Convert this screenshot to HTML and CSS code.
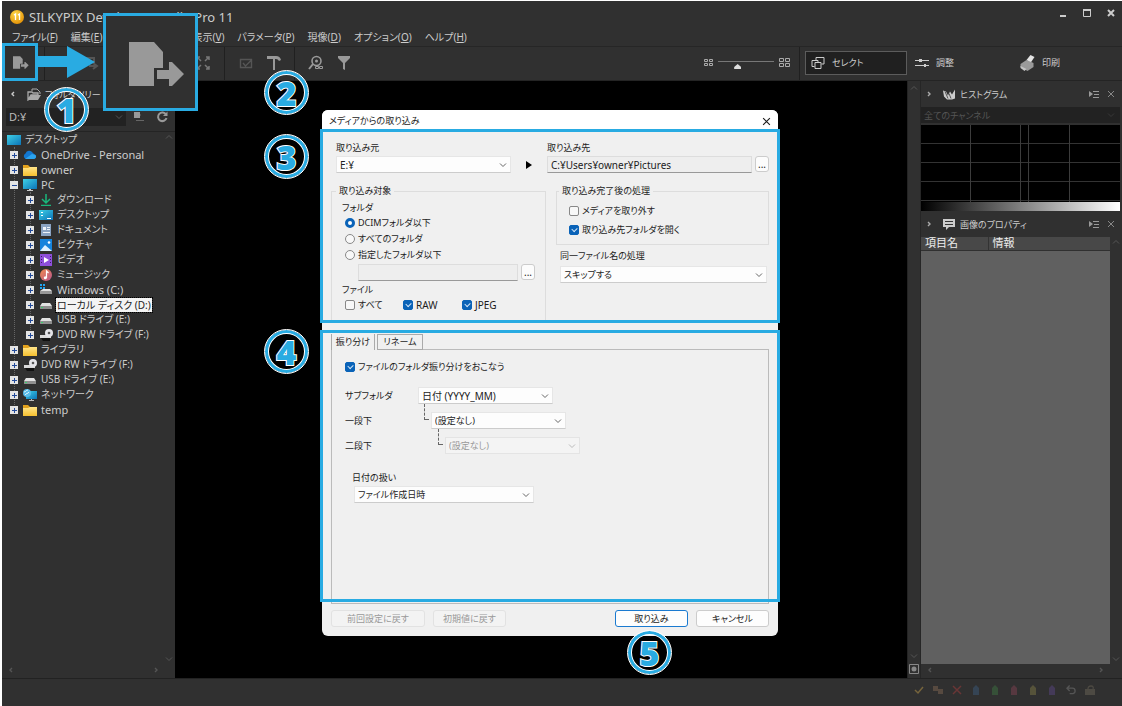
FILE: index.html
```html
<!DOCTYPE html>
<html lang="ja">
<head>
<meta charset="utf-8">
<title>SILKYPIX Developer Studio Pro 11</title>
<link rel="stylesheet" href="styles.css">
</head>
<body>
<svg class="defs" aria-hidden="true">
  <defs>
    <linearGradient id="teal" x1="0" y1="0" x2="1" y2="1"><stop offset="0" stop-color="#3fd0e6"/><stop offset="1" stop-color="#0b74b8"/></linearGradient>
    <linearGradient id="gold" x1="0" y1="0" x2="0" y2="1"><stop offset="0" stop-color="#ffe489"/><stop offset="1" stop-color="#f6c02f"/></linearGradient>
    <linearGradient id="note" x1="0" y1="0" x2="1" y2="1"><stop offset="0" stop-color="#f08a4e"/><stop offset="1" stop-color="#b8558c"/></linearGradient>
    <radialGradient id="ball" cx=".4" cy=".3" r=".8"><stop offset="0" stop-color="#ffd94a"/><stop offset="1" stop-color="#e08a00"/></radialGradient>
  </defs>
  <symbol id="chev-down" viewBox="0 0 8 8"><path d="M1 2.5 4 5.5 7 2.5" fill="none" stroke="currentColor"/></symbol>
  <symbol id="chev-up" viewBox="0 0 8 8"><path d="M1 5.5 4 2.5 7 5.5" fill="none" stroke="currentColor"/></symbol>
  <symbol id="chev-left" viewBox="0 0 8 8"><path d="M5 2 3 4 5 6" fill="none" stroke="currentColor" stroke-width="1.4"/></symbol>
  <symbol id="chev-right" viewBox="0 0 8 8"><path d="M3 2 5 4 3 6" fill="none" stroke="currentColor" stroke-width="1.4"/></symbol>
  <symbol id="cross" viewBox="0 0 8 8"><path d="M1 1 7 7M7 1 1 7" fill="none" stroke="currentColor"/></symbol>
  <symbol id="panel-menu" viewBox="0 0 10 8"><path d="M0 1v6l4-3z" fill="currentColor"/><path d="M4 1.500h6M5 4.500h5M4 7.500h6" stroke="currentColor"/></symbol>
  <symbol id="import" viewBox="0 0 56 44"><path d="M0 0h25l9 10v16h-9v18H0z" fill="currentColor"/><path d="M28 28h12v-8h3l12 12-12 12h-3v-7H28z" fill="currentColor"/></symbol>
  <symbol id="i-desk" viewBox="0 0 14 12"><path d="M0 1h14v10H0z" fill="url(#teal)"/></symbol>
  <symbol id="i-desk2" viewBox="0 0 14 12"><path d="M0 1h14v10H0z" fill="url(#teal)"/><path d="M2 3h2v1H2zM2 6h2v1H2zM8 9h4v1H8z" fill="#fff"/></symbol>
  <symbol id="i-pc" viewBox="0 0 14 12"><path d="M0 0h14v10H0z" fill="url(#teal)"/><path d="M6 10h2v1h2v1H4v-1h2z" fill="#ccc"/></symbol>
  <symbol id="i-cloud" viewBox="0 0 14 12"><path d="M3 10a3 3 0 0 1-.5-5.600A4 4 0 0 1 9.500 3.500L11 5a2.600 2.600 0 0 1 0 5z" fill="#1377d0"/><path d="M2 10 9 5l3.500 1A2.500 2.500 0 0 1 11 10z" fill="#2ba3ee"/></symbol>
  <symbol id="i-folder" viewBox="0 0 14 12"><path d="M0 1h5l2 2h6v8H0z" fill="#e2a11c"/><path d="M0 4h5l2-1h7v9H0z" fill="url(#gold)"/></symbol>
  <symbol id="i-down" viewBox="0 0 14 12"><path d="M7 0v9M3 5l4 4 4-4M2 11.500h10" fill="none" stroke="#19b87c" stroke-width="1.500"/></symbol>
  <symbol id="i-doc" viewBox="0 0 14 12"><path d="M2 0h10v12H2z" fill="#8ba4c4"/><path d="M4 3h3v3H4zM8 3h3v1H8zM8 5h3v1H8zM4 8h7v1H4z" fill="#eef3fa"/></symbol>
  <symbol id="i-pic" viewBox="0 0 14 12"><path d="M1 0h12v12H1z" fill="#1583dc"/><path d="m1 12 5-6 7 6z" fill="#dff2ff"/><circle cx="10" cy="3.500" r="1.300" fill="#fff"/></symbol>
  <symbol id="i-video" viewBox="0 0 14 12"><path d="M1 0h12v12H1z" fill="#8e4fdb"/><path d="M5 3v6l5-3z" fill="#fff"/><path d="M2 2h1v1H2zM2 5h1v1H2zM2 8h1v1H2zM11 2h1v1h-1zM11 5h1v1h-1zM11 8h1v1h-1z" fill="#3b1c66"/></symbol>
  <symbol id="i-music" viewBox="0 0 14 12"><circle cx="7" cy="6" r="6" fill="url(#note)"/><path d="M7.500 9V2l2 2" fill="none" stroke="#fff" stroke-width="1.200"/><circle cx="6.300" cy="8.700" r="1.500" fill="#fff"/></symbol>
  <symbol id="i-drive" viewBox="0 0 14 12"><path d="M3 4h8l2 3H1z" fill="#e2e2e2"/><path d="M1 7h12v3H1z" fill="#8f8f8f"/><path d="M2 8h2v1H2z" fill="#3bd16f"/></symbol>
  <symbol id="i-win" viewBox="0 0 14 12"><path d="M4 5h7l2 2H1z" fill="#e2e2e2"/><path d="M1 7h12v3H1z" fill="#999"/><path d="M1 0h2v2H1zM4 0h2v2H4zM1 3h2v2H1zM4 3h2v2H4z" fill="#20a4f3"/></symbol>
  <symbol id="i-dvd" viewBox="0 0 14 12"><path d="M1 6h11v3H1z" fill="#d8d8d8"/><path d="M2 9h9v3H4z" fill="#101010"/><circle cx="10" cy="4" r="4" fill="#e4e4e8"/><circle cx="10" cy="4" r="1.300" fill="#555"/></symbol>
  <symbol id="i-net" viewBox="0 0 14 12"><path d="M3 2h11v8H3z" fill="url(#teal)"/><path d="M8 10h1v1h2v1H6v-1h2z" fill="#bbb"/><circle cx="4" cy="4" r="4" fill="#58bdea"/><path d="M1 3c2 0 2-2 4-2M2 6c1-2 3-1 4-3" fill="none" stroke="#dff6ff"/></symbol>
  <symbol id="tag" viewBox="0 0 8 10"><path d="M1 10V3l3-3 3 3v7z" fill="currentColor"/></symbol>
</svg>

<div class="app">
  <header class="titlebar">
    <svg class="logo" viewBox="0 0 14 14"><circle cx="7" cy="7" r="7" fill="url(#ball)"/><path d="M4 5l1.500-1v6M8 5l1.500-1v6" fill="none" stroke="#fff" stroke-width="1.300"/></svg>
    <h1>SILKYPIX Developer Studio Pro 11</h1>
    <div class="winbtns">
      <button aria-label="最小化"><svg viewBox="0 0 10 10"><path d="M2 8h6" stroke="currentColor" stroke-width="2"/></svg></button>
      <button aria-label="最大化"><svg viewBox="0 0 10 10"><path d="M1.500 2v6.500h7V2" fill="none" stroke="currentColor"/><path d="M1 2h8" stroke="currentColor" stroke-width="2"/></svg></button>
      <button aria-label="閉じる"><svg viewBox="0 0 10 10"><path d="M2 2l6 6M8 2 2 8" stroke="currentColor" stroke-width="2"/></svg></button>
    </div>
  </header>

  <nav class="menubar">
    <button>ファイル(<u>F</u>)</button><button>編集(<u>E</u>)</button><button class="after-gap">表示(<u>V</u>)</button><button>パラメータ(<u>P</u>)</button><button>現像(<u>D</u>)</button><button>オプション(<u>O</u>)</button><button>ヘルプ(<u>H</u>)</button>
  </nav>

  <div class="toolbar">
    <div class="tools first"><button class="tool" aria-label="取り込み"><svg class="small-import"><use href="#import"/></svg></button></div>
    <div class="tools wide">
      <button class="tool dim" aria-label="コピー"><svg viewBox="0 0 16 16"><path d="M3 3h8v5M6 11h7M10 8l4 3-4 3" fill="none" stroke="currentColor" stroke-width="2"/></svg></button>
      <button class="tool mid" aria-label="全画面"><svg viewBox="0 0 16 16"><path d="M2 5V2h3M2 2l4 4M11 2h3v3M14 2l-4 4M2 11v3h3M2 14l4-4M14 11v3h-3M14 14l-4-4" fill="none" stroke="currentColor" stroke-width="1.500"/></svg></button>
    </div>
    <div class="tools">
      <button class="tool dim" aria-label="選択"><svg viewBox="0 0 16 16"><path d="M2.500 4.500h11v8h-11zM5 8l2.500 3 6-6" fill="none" stroke="currentColor" stroke-width="1.400"/></svg></button>
      <button class="tool" aria-label="設定"><svg viewBox="0 0 16 16"><path d="M1 1h9q4 0 5 4l-2 1q-1-2-3-2H9v11H7V4H1z" fill="currentColor"/></svg></button>
    </div>
    <div class="tools last">
      <button class="tool" aria-label="検索"><svg viewBox="0 0 16 16"><circle cx="8.500" cy="6" r="4.500" fill="none" stroke="currentColor" stroke-width="1.600"/><circle cx="8.500" cy="6" r="1.500" fill="currentColor"/><path d="M5 9 1 14" stroke="currentColor" stroke-width="2"/><path d="M7.500 11.500h3v2h-3zM11.500 11.500h3v2h-3z" fill="#303030" stroke="currentColor"/></svg></button>
      <button class="tool" aria-label="フィルタ"><svg viewBox="0 0 16 16"><path d="M2 1h12v2l-5 5v7l-2-1V8L2 3z" fill="currentColor"/></svg></button>
    </div>
    <div class="zoomer">
      <svg class="grid-s" viewBox="0 0 9 7"><path d="M.5.500h3v2h-3zM5.500.500h3v2h-3zM.5 4.500h3v2h-3zM5.500 4.500h3v2h-3z" fill="none" stroke="currentColor"/></svg>
      <input type="range" min="0" max="100" value="33" aria-label="サムネイルの大きさ">
      <svg class="grid-l" viewBox="0 0 11 9"><path d="M.5.500h4v3h-4zM6.500.500h4v3h-4zM.5 5.500h4v3h-4zM6.500 5.500h4v3h-4z" fill="none" stroke="currentColor"/></svg>
    </div>
    <div class="modes">
      <button class="mode on"><svg viewBox="0 0 13 12"><path d="M4.500 3V.500h8V7H10M.5 3.500h6V6M.5 3.500v6H3M3.500 5.500h6v6h-6z" fill="none" stroke="currentColor"/></svg>セレクト</button>
      <button class="mode adjust"><svg viewBox="0 0 14 12"><path d="M0 3.500h14M0 8.500h14" stroke="currentColor"/><path d="M4 2h3v3H4zM9 7h2v3H9z" fill="currentColor"/></svg>調整</button>
      <button class="mode"><svg class="printer" viewBox="0 0 14 16"><path d="M6 5l4-5 4 2-4 6z" fill="#e4e4e4"/><path d="M0 9l6-4 7 3v4l-6 4-7-4z" fill="#9a9a9a"/><path d="m0 11 6 3-2 2-4-3z" fill="#c4c4c4"/></svg>印刷</button>
    </div>
  </div>

  <main class="work">
    <aside class="tree-pane">
      <div class="pane-head"><svg class="ico8"><use href="#chev-left"/></svg>
        <svg class="open-folder" viewBox="0 0 14 13"><path d="M1 12V4h4l1 1h5v2H4z" fill="none" stroke="currentColor" stroke-width="1.300"/><path d="M4 7h10l-3 5H1z" fill="currentColor"/><path d="M5 3V1h5l3 3v2" fill="none" stroke="currentColor"/></svg><h2>フォルダツリー</h2></div>
      <div class="path-row">
        <div class="select dark"><select aria-label="ドライブ"><option>D:¥</option></select><svg class="ico8"><use href="#chev-down"/></svg></div>
        <button class="tool" aria-label="複製"><svg viewBox="0 0 12 12"><path d="M2 1h6v6H2z" fill="currentColor"/><path d="M4 9.500h8M8 4h1" stroke="#666"/></svg></button>
        <button class="tool" aria-label="更新"><svg viewBox="0 0 12 12"><path d="M10 3.500A4.300 4.300 0 1 0 10.500 7" fill="none" stroke="currentColor" stroke-width="2"/><path d="M7 5h4.500V.500z" fill="currentColor"/></svg></button>
      </div>
      <div class="tree-wrap">
        <ul class="tree">
          <li class="root"><div class="row"><svg><use href="#i-desk"/></svg><span>デスクトップ</span></div>
            <ul>
              <li><div class="row latin"><b class="plus"></b><svg><use href="#i-cloud"/></svg><span>OneDrive - Personal</span></div></li>
              <li><div class="row latin"><b class="plus"></b><svg><use href="#i-folder"/></svg><span>owner</span></div></li>
              <li><div class="row latin"><b class="minus"></b><svg><use href="#i-pc"/></svg><span>PC</span></div>
                <ul>
                  <li><div class="row"><b class="plus"></b><svg><use href="#i-down"/></svg><span>ダウンロード</span></div></li>
                  <li><div class="row"><b class="plus"></b><svg><use href="#i-desk2"/></svg><span>デスクトップ</span></div></li>
                  <li><div class="row"><b class="plus"></b><svg><use href="#i-doc"/></svg><span>ドキュメント</span></div></li>
                  <li><div class="row"><b class="plus"></b><svg><use href="#i-pic"/></svg><span>ピクチャ</span></div></li>
                  <li><div class="row"><b class="plus"></b><svg><use href="#i-video"/></svg><span>ビデオ</span></div></li>
                  <li><div class="row"><b class="plus"></b><svg><use href="#i-music"/></svg><span>ミュージック</span></div></li>
                  <li><div class="row latin"><b class="plus"></b><svg><use href="#i-win"/></svg><span>Windows (C:)</span></div></li>
                  <li><div class="row"><b class="plus"></b><svg><use href="#i-drive"/></svg><span class="picked">ローカル ディスク (D:)</span></div></li>
                  <li><div class="row"><b class="plus"></b><svg><use href="#i-drive"/></svg><span>USB ドライブ (E:)</span></div></li>
                  <li><div class="row"><b class="plus"></b><svg><use href="#i-dvd"/></svg><span>DVD RW ドライブ (F:)</span></div></li>
                </ul></li>
              <li><div class="row"><b class="plus"></b><svg><use href="#i-folder"/></svg><span>ライブラリ</span></div></li>
              <li><div class="row"><b class="plus"></b><svg><use href="#i-dvd"/></svg><span>DVD RW ドライブ (F:)</span></div></li>
              <li><div class="row"><b class="plus"></b><svg><use href="#i-drive"/></svg><span>USB ドライブ (E:)</span></div></li>
              <li><div class="row"><b class="plus"></b><svg><use href="#i-net"/></svg><span>ネットワーク</span></div></li>
              <li><div class="row latin"><b class="plus"></b><svg><use href="#i-folder"/></svg><span>temp</span></div></li>
            </ul></li>
        </ul>
        <div class="vbar"><svg class="ico8"><use href="#chev-up"/></svg><svg class="ico8"><use href="#chev-down"/></svg></div>
      </div>
      <div class="hbar"><svg class="ico8"><use href="#chev-left"/></svg><svg class="ico8"><use href="#chev-right"/></svg></div>
    </aside>

    <section class="stage"></section>

    <div class="vbar strip"><svg class="ico8"><use href="#chev-up"/></svg><div class="strip-end"><svg class="ico8"><use href="#chev-down"/></svg><svg class="target" viewBox="0 0 10 10"><path d="M.5.500h9v9h-9z" fill="none" stroke="currentColor"/><circle cx="5" cy="5" r="2.500" fill="currentColor"/></svg></div></div>

    <aside class="info-pane">
      <div class="pane-head"><svg class="ico8"><use href="#chev-right"/></svg>
        <svg class="head-ico" viewBox="0 0 12 10"><path d="M0 1l3 1 2 4 2-4 2 3 3-5v9l-3 1H4L1 7z" fill="#ccc"/><path d="m2 2 3 7M6 4l2 5" stroke="#555"/></svg><h2>ヒストグラム</h2><svg class="pm"><use href="#panel-menu"/></svg><svg class="ico8 x"><use href="#cross"/></svg></div>
      <div class="select chan"><select aria-label="チャンネル" disabled><option>全てのチャンネル</option></select><svg class="ico8"><use href="#chev-down"/></svg></div>
      <div class="histo"><i></i><i></i><i></i><i></i><i></i></div>
      <div class="ramp"></div>
      <div class="pane-head"><svg class="ico8"><use href="#chev-right"/></svg>
        <svg class="head-ico" viewBox="0 0 12 11"><path d="M0 0h12v8H6l-3 3V8H0z" fill="#ccc"/><path d="M2 2.500h8M2 5.500h8" stroke="#333"/></svg><h2>画像のプロパティ</h2><svg class="pm"><use href="#panel-menu"/></svg><svg class="ico8 x"><use href="#cross"/></svg></div>
      <div class="props">
        <table><thead><tr><th>項目名</th><th>情報</th></tr></thead></table>
        <div class="vbar"><svg class="ico8"><use href="#chev-up"/></svg><svg class="ico8"><use href="#chev-down"/></svg></div>
      </div>
      <div class="hbar"><svg class="ico8"><use href="#chev-left"/></svg><svg class="ico8"><use href="#chev-right"/></svg></div>
    </aside>
  </main>

  <footer class="status">
    <svg viewBox="0 0 10 10"><path d="m1 5 3 3 5-6" fill="none" stroke="#76643c" stroke-width="1.500"/></svg>
    <svg viewBox="0 0 10 10"><path d="M0 1h5v5H0zM5 4h5v5H5z" fill="#574a40"/></svg>
    <svg viewBox="0 0 10 10"><path d="m1 1 8 8M9 1 1 9" stroke="#693636" stroke-width="1.500"/></svg>
    <svg class="blue"><use href="#tag"/></svg><svg class="green"><use href="#tag"/></svg><svg class="red"><use href="#tag"/></svg><svg class="yellow"><use href="#tag"/></svg><svg class="violet"><use href="#tag"/></svg>
    <svg viewBox="0 0 11 10"><path d="M4 0 1 3l3 3M1 3h6q3 0 3 3t-4 3H4" fill="none" stroke="#555" stroke-width="1.500"/></svg>
    <svg viewBox="0 0 10 10"><path d="M0 4h10v6H0z" fill="#4d4a43"/><path d="M3 4q0-3 3-3t2 3" fill="none" stroke="#4d4a43" stroke-width="1.300"/></svg>
  </footer>

  <form class="dialog" role="dialog" aria-label="メディアからの取り込み">
    <div class="dlg-title"><h2>メディアからの取り込み</h2><button type="button" aria-label="閉じる"><svg class="ico8"><use href="#cross"/></svg></button></div>
    <div class="dlg-body">
      <div class="source-row">
        <div class="field"><label for="src">取り込み元</label><div class="select latin"><select id="src"><option>E:¥</option></select><svg class="ico8"><use href="#chev-down"/></svg></div></div>
        <svg class="play" viewBox="0 0 6 8"><path d="M0 0v8l6-4z"/></svg>
        <div class="field"><label for="dst">取り込み先</label><div class="pick latin"><input class="text" id="dst" type="text" value="C:¥Users¥owner¥Pictures" readonly><button type="button" class="dots">...</button></div></div>
      </div>
      <div class="options">
        <fieldset class="targets"><legend>取り込み対象</legend>
          <p>フォルダ</p>
          <label class="opt"><input type="radio" name="f" checked>DCIMフォルダ以下</label>
          <label class="opt"><input type="radio" name="f">すべてのフォルダ</label>
          <label class="opt"><input type="radio" name="f">指定したフォルダ以下</label>
          <div class="pick sub latin"><input class="text" type="text" aria-label="フォルダの指定" disabled><button type="button" class="dots">...</button></div>
          <p>ファイル</p>
          <div class="types"><label class="opt"><input type="checkbox">すべて</label><label class="opt latin"><input type="checkbox" checked>RAW</label><label class="opt latin"><input type="checkbox" checked>JPEG</label></div>
        </fieldset>
        <div class="after">
          <fieldset><legend>取り込み完了後の処理</legend>
            <label class="opt"><input type="checkbox">メディアを取り外す</label>
            <label class="opt"><input type="checkbox" checked>取り込み先フォルダを開く</label>
          </fieldset>
          <div class="field same"><label for="same">同一ファイル名の処理</label><div class="select"><select id="same"><option>スキップする</option></select><svg class="ico8"><use href="#chev-down"/></svg></div></div>
        </div>
      </div>
      <div class="tabs" role="tablist"><button type="button" role="tab" class="on">振り分け</button><button type="button" role="tab">リネーム</button><span></span></div>
      <div class="tabpanel">
        <label class="opt"><input type="checkbox" checked>ファイルのフォルダ振り分けをおこなう</label>
        <div class="levels">
          <label for="l0">サブフォルダ</label><div class="select latin"><select id="l0"><option>日付 (YYYY_MM)</option></select><svg class="ico8"><use href="#chev-down"/></svg></div>
          <label for="l1">一段下</label><div class="level l1"><i></i><div class="select"><select id="l1"><option>(設定なし)</option></select><svg class="ico8"><use href="#chev-down"/></svg></div></div>
          <label for="l2">二段下</label><div class="level l2"><i></i><div class="select off"><select id="l2" disabled><option>(設定なし)</option></select><svg class="ico8"><use href="#chev-down"/></svg></div></div>
        </div>
        <div class="field date"><label for="date">日付の扱い</label><div class="select"><select id="date"><option>ファイル作成日時</option></select><svg class="ico8"><use href="#chev-down"/></svg></div></div>
      </div>
      <div class="actions"><button type="button" class="btn long" disabled>前回設定に戻す</button><button type="button" class="btn" disabled>初期値に戻す</button><button type="button" class="btn primary">取り込み</button><button type="button" class="btn">キャンセル</button></div>
    </div>
    <div class="frame upper"></div>
    <div class="frame lower"></div>
  </form>

  <div class="frame tool-frame"></div>
  <svg class="arrow" viewBox="0 0 58 32"><path d="M0 10h30V0l28 16-28 16V21H0z" fill="#29abe2"/></svg>
  <div class="frame magnifier"><svg><use href="#import"/></svg></div>
  <span class="callout c1">1</span>
  <span class="callout c2">2</span>
  <span class="callout c3">3</span>
  <span class="callout c4">4</span>
  <span class="callout c5">5</span>
</div>
</body>
</html>
```
FILE: styles.css
```css
* { box-sizing: border-box; }
html, body { margin: 0; }
body {
  background: #fff;
  padding: 1px 0 0 2px;
  color: #ccc;
  font: 11px/15px "Noto Sans", "Noto Sans CJK JP", sans-serif;
  font-feature-settings: "palt";
}
button, select, input { font: inherit; font-feature-settings: inherit; color: inherit; margin: 0; padding: 0; border: 0; background: none; }
h1, h2, p, ul { margin: 0; padding: 0; font: inherit; list-style: none; }
svg { display: block; flex: none; }
.defs { position: absolute; width: 0; height: 0; }
.ico8 { width: 8px; height: 8px; }

.app { position: relative; display: grid; grid-template-rows: 28px 17px 35px 1fr 28px; min-height: calc(100vh - 1px); background: #303030; overflow: hidden; }

.titlebar { display: flex; align-items: center; gap: 5px; padding: 4px 6px 0 8px; }
.titlebar h1 { flex: 1; font-size: 13px; line-height: 20px; }
.logo { width: 14px; height: 14px; }
.winbtns { display: flex; gap: 14px; align-self: flex-start; padding-top: 1px; }
.winbtns svg { width: 10px; height: 14px; }

.menubar { display: flex; align-items: center; gap: 13px; padding-left: 10px; font-size: 10px; white-space: nowrap; }
.menubar .after-gap { margin-left: 77px; }

.toolbar { display: flex; align-items: stretch; border-top: 1px solid #262626; border-bottom: 1px solid #242424; }
.tools { display: flex; align-items: center; justify-content: center; width: 70px; padding-bottom: 2px; border-right: 1px solid #202020; }
.tools.first { width: 43px; padding-right: 5px; }
.tools.wide { width: 180px; justify-content: space-between; padding: 0 7px 2px 32px; }
.tools.last { border: 0; }
.tool { display: grid; place-items: center; width: 28px; height: 24px; color: #999; }
.tool svg { width: 16px; height: 16px; }
.tool .small-import { width: 16px; height: 13px; }
.tool.dim { color: #555; }
.tool.mid { color: #777; }
.zoomer { display: flex; align-items: center; gap: 5px; margin-left: auto; padding: 0 9px 2px 0; color: #aaa; }
.grid-s { width: 9px; height: 7px; }
.grid-l { width: 11px; height: 9px; }
.zoomer input { appearance: none; width: 56px; height: 13px; background: linear-gradient(#777, #777) 0 5px / 100% 1px no-repeat; }
.zoomer input::-webkit-slider-thumb { appearance: none; width: 7px; height: 5px; margin-top: 8px; background: #ddd; clip-path: polygon(50% 0, 100% 60%, 100% 100%, 0 100%, 0 60%); }
.modes { display: flex; align-items: center; width: 323px; padding: 0 0 2px 5px; border-left: 1px solid #202020; font-size: 9px; }
.mode { display: flex; align-items: center; gap: 7px; height: 24px; }
.mode svg { width: 14px; height: 12px; }
.mode .printer { width: 15px; height: 16px; }
.mode.on { width: 102px; padding-left: 5px; border: 1px solid #5c5c5c; background: #202020; }
.mode.adjust { width: 105px; margin-left: 8px; }

.work { display: grid; grid-template-columns: 173px minmax(0, 1fr) 13px 202px; min-height: 0; }
.stage { background: #000; }
.vbar { display: flex; flex-direction: column; justify-content: space-between; align-items: center; width: 12px; padding: 1px 0; color: #555; }
.hbar { display: flex; justify-content: space-between; align-items: center; height: 14px; padding: 0 15px 2px 5px; color: #555; }
.pane-head { display: flex; align-items: center; height: 26px; font-size: 9px; }
.select { position: relative; display: flex; align-items: center; height: 16px; }
.select select { appearance: none; flex: 1; width: 100%; height: 100%; padding: 0 3px; border-radius: 0; opacity: 1; }
.select > svg { position: absolute; right: 3px; pointer-events: none; }

.tree-pane { display: flex; flex-direction: column; }
.tree-pane .pane-head { gap: 4px; padding-left: 7px; }
.tree-pane .pane-head .ico8 { margin-right: 6px; }
.open-folder { width: 14px; height: 13px; color: #aaa; }
.path-row { display: flex; align-items: center; height: 25px; padding: 0 0 5px 4px; border-bottom: 1px solid #242424; }
.select.dark { width: 120px; height: 18px; background: #222; color: #bbb; }
.select.dark > svg { color: #555; }
.path-row .tool { width: 24px; }
.path-row .tool svg { width: 12px; height: 12px; }
.tree-wrap { display: flex; flex: 1; }
.tree { flex: 1; padding: 0 0 0 5px; font-size: 10px; white-space: nowrap; min-width: 0; }
.tree .latin { font-size: 11px; }
.tree ul { position: relative; padding-left: 3px; }
.tree ul ul { padding-left: 16px; }
.tree ul::before { content: ""; position: absolute; left: 7px; top: 0; bottom: 8px; border-left: 1px dotted #666; }
.tree ul ul::before { left: 20px; }
.row { position: relative; display: flex; align-items: center; height: 15px; }
.row svg { width: 14px; height: 12px; margin-right: 4px; }
.row b { width: 8px; height: 8px; margin: 1px 5px 0 0; background: linear-gradient(#224a9a, #224a9a) 2px 4px / 5px 1px no-repeat, linear-gradient(#224a9a, #224a9a) 4px 2px / 1px 5px no-repeat, #e4e4e4; }
.row b.minus { background: linear-gradient(#224a9a, #224a9a) 2px 4px / 5px 1px no-repeat, #e4e4e4; }
.row .picked { padding: 0 1px; margin-left: -1px; outline: 1px dotted #000; background: #f4f4f4; color: #222; line-height: 14px; }

.strip { width: 13px; padding-top: 3px; border-left: 1px solid #242424; }
.strip-end { display: grid; justify-items: center; gap: 4px; }
.target { width: 10px; height: 10px; color: #888; margin-bottom: 3px; }

.info-pane { display: flex; flex-direction: column; padding-right: 2px; border-left: 1px solid #262626; }
.info-pane .pane-head { padding: 0 5px 0 4px; }
.info-pane .pane-head h2 { flex: 1; margin-left: 5px; }
.info-pane .pane-head .ico8:first-child { margin-right: 10px; color: #aaa; }
.head-ico { width: 12px; height: 11px; }
.pm { width: 10px; height: 8px; margin-right: 8px; color: #999; }
.info-pane .x { color: #888; }
.select.chan { margin-bottom: 2px; background: #222; color: #555; font-size: 9px; }
.select.chan > svg { right: 5px; color: #383838; }
.histo { position: relative; display: grid; grid-template-columns: 50px 50px 8px 41px 1fr; height: 77px; background: repeating-linear-gradient(#0000 0 18px, #333 18px 19px) #000; }
.histo i { border-right: 1px solid #3c3c3c; }
.histo i:last-child { border: 0; }
.ramp { height: 9px; background: linear-gradient(90deg, #000, #fff); }
.props { display: flex; flex: 1; background: #606060; }
.props .vbar { margin-right: -2px; background: #303030; }
.props table { flex: 1; align-self: flex-start; border-collapse: collapse; table-layout: fixed; background: #484848; color: #eee; }
.props th { height: 13px; padding: 0 4px; text-align: left; font-weight: 400; line-height: 12px; border-bottom: 1px solid #303030; }
.props th:first-child { width: 67px; border-right: 1px solid #333; }

.status { display: flex; justify-content: flex-end; align-items: center; gap: 9px; padding: 0 27px 6px 0; border-top: 1px solid #222; }
.status svg { width: 10px; height: 10px; }
.blue { color: #354454; } .green { color: #365038; } .red { color: #573840; } .yellow { color: #56533a; } .violet { color: #443a58; }

.dialog { position: absolute; left: 320px; top: 109px; width: 456px; border-radius: 6px; background: #f0f0f0; color: #1c1c1c; font-size: 9px; line-height: 14px; }
.dialog .latin { font-size: 10px; }
.dlg-title { display: flex; align-items: center; justify-content: space-between; height: 22px; padding: 0 7px; border-radius: 6px 6px 0 0; background: #fff; }
.dlg-title svg { width: 9px; height: 9px; }
.dlg-body { padding: 9px; }
.source-row { display: flex; align-items: flex-end; padding-left: 5px; }
.source-row .field:first-child { width: 175px; }
.source-row .field:last-child { flex: 1; }
.play { width: 6px; height: 8px; margin: 0 15px 4px; }
.field label { display: block; height: 15px; }
.select { background: #fdfdfd; }
.dialog .select { border: 1px solid #e6e6e6; border-bottom-color: #ccc; height: 17px; color: #222; }
.dialog .select > svg { color: #666; }
.dialog .select.off { background: #f4f4f4; border-color: #e4e4e4; color: #999; }
.dialog .select.off > svg { color: #bbb; }
.pick { display: flex; gap: 3px; }
.text { flex: 1; min-width: 0; height: 17px; padding: 0 3px; border: 1px solid #ddd; border-bottom-color: #999; background: #eee; }
.dots { width: 14px; height: 16px; border: 1px solid #ccc; border-radius: 3px; background: #fcfcfc; line-height: 10px; }
.options { display: grid; grid-template-columns: 215px 213px; justify-content: space-between; margin-top: 11px; }
fieldset { min-width: 0; margin: 0; padding: 0 8px; border: 1px solid #ddd; }
legend { padding: 0 3px; margin-left: -4px; }
.targets { height: 138px; padding: 3px 10px 0; }
.targets legend { margin-left: -6px; }
.targets .opt { height: 16px; padding-left: 3px; }
.opt { display: flex; align-items: center; gap: 3px; height: 19px; white-space: nowrap; }
.opt input { appearance: none; flex: none; width: 10px; height: 10px; border: 1px solid #888; border-radius: 2px; background: #f8f8f8; }
.opt input[type="radio"] { border-radius: 50%; }
.opt input[type="radio"]:checked { border: 3px solid #0a63b8; background: #fff; }
.opt input[type="checkbox"]:checked { position: relative; border-color: #0a63b8; background: #0a63b8; }
.opt input[type="checkbox"]:checked::after { content: ""; position: absolute; left: 2px; top: 1px; width: 4px; height: 3px; border: solid #cfe4f8; border-width: 0 0 1px 1px; rotate: -45deg; }
.pick.sub { margin: 1px 0 2px 16px; }
.types { display: grid; grid-template-columns: 58px 59px 1fr; }
.after { display: flex; flex-direction: column; }
.after fieldset { height: 61px; padding: 3px 12px 0; }
.after legend { margin-left: -10px; }
.same { margin: 4px 2px 0 4px; }
.same label { height: 17px; }
.tabs { display: flex; align-items: flex-end; height: 18px; margin-top: 10px; }
.tabs button { height: 16px; width: 46px; border: 1px solid #aaa; }
.tabs button.on { width: 44px; border-width: 0 1px 0 1px; margin-right: 2px; }
.tabs span { flex: 1; border-bottom: 1px solid #bbb; }
.tabpanel { min-height: 254px; padding: 7px 13px; border: 1px solid #bbb; border-top: 0; }
.levels { display: grid; grid-template-columns: 73px 1fr; row-gap: 8px; align-items: center; margin-top: 11px; }
.levels .select { width: 135px; }
.level { display: flex; }
.level i { position: relative; width: 5px; height: 16px; margin: -8px 2px 0 0; border: dashed #666; border-width: 0 0 1px 1px; }
.l1 { padding-left: 6px; }
.l2 { padding-left: 20px; }
.field.date { width: 180px; margin: 17px 0 0 9px; }
.field.date label { margin-left: -2px; }
.actions { display: flex; gap: 8px; margin-top: 6px; }
.btn { width: 73px; height: 17px; border: 1px solid #ccc; border-radius: 3px; background: #fdfdfd; line-height: 14px; white-space: nowrap; }
.btn.long { width: 94px; }
.btn:disabled { border-color: #e2e2e2; background: #f3f3f3; color: #999; }
.btn.primary { margin-left: auto; border-color: #1a7ad0; }

.frame { position: absolute; border: 3px solid #29abe2; pointer-events: none; }
.frame.upper { left: -2px; right: -2px; top: 19px; height: 194px; }
.frame.lower { left: -2px; right: -2px; top: 220px; height: 272px; }
.tool-frame { left: 0; top: 42px; width: 36px; height: 38px; }
.arrow { position: absolute; left: 35px; top: 45px; width: 58px; height: 32px; }
.magnifier { display: grid; place-items: center; left: 101px; top: 12px; width: 95px; height: 98px; padding: 3px 0 0 13px; background: #303030; color: #999; }
.magnifier svg { width: 56px; height: 44px; }
.callout { position: absolute; display: grid; place-items: center; width: 45px; height: 45px; border: 1px solid #fff; border-radius: 50%; box-shadow: inset 0 0 0 3px #29abe2, inset 0 0 0 4px #fff; color: #29abe2; font: 800 34px/34px "Open Sans", sans-serif; -webkit-text-stroke: 2px #fff; paint-order: stroke fill; }
.c1 { left: 42px; top: 86px; }
.c2 { left: 262px; top: 69px; }
.c3 { left: 262px; top: 133px; }
.c4 { left: 262px; top: 328px; }
.c5 { left: 625px; top: 629px; }
```
